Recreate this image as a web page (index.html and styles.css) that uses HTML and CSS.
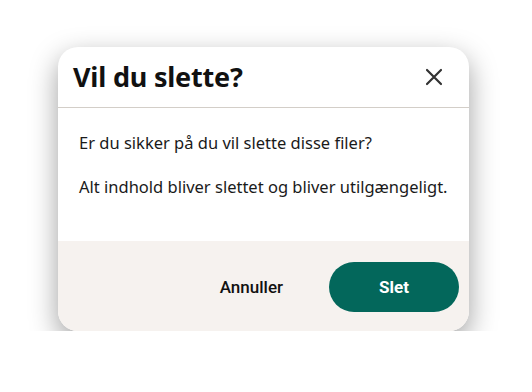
FILE: index.html
```html
<!DOCTYPE html>
<html lang="da">
<head>
  <meta charset="utf-8" />
  <title>Vil du slette?</title>
  <link rel="stylesheet" href="styles.css">
</head>
<body>
  <div class="dialog" role="dialog" aria-labelledby="dialogTitle">
    <header class="dialog-header">
      <h1 id="dialogTitle">Vil du slette?</h1>
      <button class="close-btn" aria-label="Luk">
        <svg width="20" height="20" viewBox="0 0 20 20">
          <path d="M3 3 L17 17 M17 3 L3 17" stroke="#333" stroke-width="2.2" stroke-linecap="round" fill="none" />
        </svg>
      </button>
    </header>
    <div class="dialog-body">
      <p>Er du sikker på du vil slette disse filer?</p>
      <p>Alt indhold bliver slettet og bliver utilgængeligt.</p>
    </div>
    <footer class="dialog-footer">
      <button class="btn btn-text">Annuller</button>
      <button class="btn btn-primary">Slet</button>
    </footer>
  </div>
</body>
</html>
```

FILE: styles.css
```css
body {
  margin: 0;
  padding: 47px 0 0 58px;
  background: #fff;
  font-family: "Noto Sans", sans-serif;
}
.dialog {
  width: 411px;
  border-radius: 20px;
  overflow: hidden;
  background: #fff;
  box-shadow: 0 10px 28px rgba(0,0,0,0.38);
}
.dialog-header {
  height: 60px;
  display: flex;
  align-items: center;
  justify-content: space-between;
  padding: 0 20px 0 15px;
  border-bottom: 1px solid #d3cec8;
}
h1 {
  margin: 0 0 2px;
  font-size: 27px;
  font-weight: 700;
  color: #111;
  letter-spacing: -0.2px;
}
.close-btn {
  border: none;
  background: none;
  padding: 0;
  width: 30px;
  height: 30px;
  display: flex;
  align-items: center;
  justify-content: center;
  cursor: pointer;
}
.dialog-body {
  padding: 23px 20px 42px 21px;
}
.dialog-body p {
  margin: 0;
  font-size: 16.5px;
  line-height: 24px;
  color: #1a1a1a;
}
.dialog-body p + p {
  margin-top: 20px;
}
.dialog-footer {
  background: #f6f2ef;
  height: 88px;
  display: flex;
  align-items: center;
  justify-content: flex-end;
  gap: 21px;
  padding: 2px 10px 0;
}
.btn {
  font-family: Roboto, sans-serif;
  font-size: 17px;
  height: 50px;
  border: none;
  border-radius: 25px;
  cursor: pointer;
}
.btn-text {
  background: none;
  color: #111;
  font-weight: 500;
  padding: 0 25px;
}
.btn-primary {
  background: #03675b;
  color: #fff;
  font-weight: 700;
  width: 130px;
}
```
